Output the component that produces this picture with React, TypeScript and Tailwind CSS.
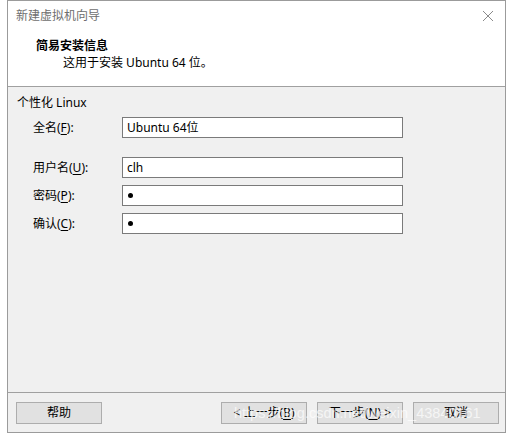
import React from "react";

const font = { fontFamily: '"Noto Sans", "Noto Sans CJK SC", sans-serif' };

function U({ c }: { c: string }) {
  return <span className="underline underline-offset-2">{c}</span>;
}

function Field({
  label,
  value,
  dot,
}: {
  label: React.ReactNode;
  value?: string;
  dot?: boolean;
}) {
  return (
    <div className="flex items-center h-[21px]">
      <div className="w-[114px] pl-[25px] text-[12px] text-black whitespace-nowrap">{label}</div>
      <div className="w-[281px] h-[21px] bg-white border border-[#7a7a7a] flex items-center pl-[4px] text-[12px] text-black">
        {dot ? (
          <span className="inline-block w-[5px] h-[5px] rounded-full bg-black ml-[1px]" />
        ) : (
          value
        )}
      </div>
    </div>
  );
}

function Btn({ children, cls = "" }: { children: React.ReactNode; cls?: string }) {
  return (
    <div
      className={
        "w-[86px] h-[22px] bg-[#e1e1e1] border border-[#adadad] flex items-center justify-center text-[12px] text-black " +
        cls
      }
    >
      {children}
    </div>
  );
}

export default function App() {
  return (
    <div className="w-[513px] h-[440px] bg-white relative overflow-hidden" style={font}>
      <div className="ml-[7px] w-[499px] h-[433px] border border-[#9b9b9b] flex flex-col">
        {/* header */}
        <div className="h-[86px] bg-white border-b border-[#a0a0a0] relative flex flex-col">
          <div className="flex items-center justify-between h-[30px] pl-[8px] pr-[10px]">
            <span className="text-[12px] text-[#6e6e6e] leading-none">新建虚拟机向导</span>
            <svg width="12" height="12" viewBox="0 0 12 12" className="mr-[1px]">
              <path d="M1 1 L11 11 M11 1 L1 11" stroke="#8a8a8a" strokeWidth="1" fill="none" />
            </svg>
          </div>
          <div className="pl-[28px] mt-[7px] text-[12px] font-bold text-black leading-[16px]">简易安装信息</div>
          <div className="pl-[55px] mt-[1px] text-[12px] text-black leading-[16px]">这用于安装 Ubuntu 64 位。</div>
        </div>
        {/* body */}
        <div className="flex-1 bg-[#f0f0f0] flex flex-col border-b border-[#a0a0a0]">
          <div className="pl-[9px] mt-[8px] text-[12px] text-black leading-[16px]">个性化 Linux</div>
          <div className="mt-[6px]">
            <Field
              label={
                <>
                  全名(<U c="F" />):
                </>
              }
              value="Ubuntu 64位"
            />
          </div>
          <div className="mt-[19px]">
            <Field
              label={
                <>
                  用户名(<U c="U" />):
                </>
              }
              value="clh"
            />
          </div>
          <div className="mt-[7px]">
            <Field
              label={
                <>
                  密码(<U c="P" />):
                </>
              }
              dot
            />
          </div>
          <div className="mt-[7px]">
            <Field
              label={
                <>
                  确认(<U c="C" />):
                </>
              }
              dot
            />
          </div>
        </div>
        {/* footer */}
        <div className="h-[39px] bg-[#f0f0f0] flex items-start pt-[9px] pl-[8px]">
          <Btn>帮助</Btn>
          <div className="flex gap-[10px] ml-[119px]">
            <Btn>
              &lt; 上一步(<U c="B" />)
            </Btn>
            <Btn>
              下一步(<U c="N" />) &gt;
            </Btn>
            <Btn>取消</Btn>
          </div>
        </div>
      </div>
      <div
        className="absolute left-[234px] top-[403px] text-[14.5px] text-white/70 whitespace-nowrap pointer-events-none"
        style={{ fontFamily: '"Liberation Sans", Arial, sans-serif' }}
      >
        https://blog.csdn.net/weixin_43840161
      </div>
    </div>
  );
}
